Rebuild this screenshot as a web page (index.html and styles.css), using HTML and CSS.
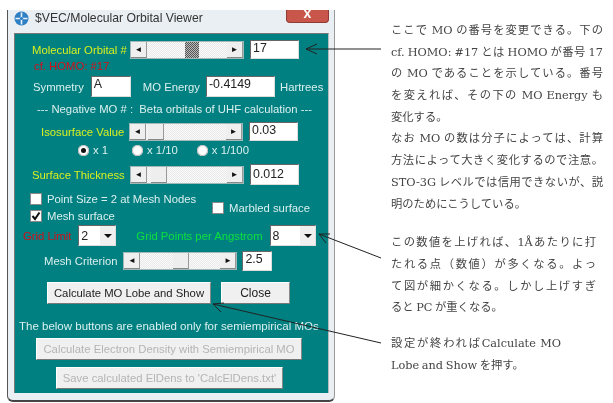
FILE: index.html
```html
<!DOCTYPE html>
<html lang="en">
<head>
  <meta charset="UTF-8">
  <title>$VEC/Molecular Orbital Viewer</title>
  <meta name="viewport" content="width=device-width, initial-scale=1">
  <link rel="stylesheet" href="styles.css">
</head>
<body>
  <div class="window">
    <div class="titlebar">
      <svg class="app-icon" width="15" height="15" viewBox="0 0 15 15">
        <circle cx="7.5" cy="7.5" r="7" fill="#2f7fc4"/>
        <path d="M7.5 1.5v12M1.5 7.5h12" stroke="#e8f2fa" stroke-width="1.6"/>
        <circle cx="7.5" cy="7.5" r="1.6" fill="#2f7fc4"/>
      </svg>
      <span class="title">$VEC/Molecular Orbital Viewer</span>
      <div class="close-x">x</div>
    </div>
    <div class="panel">
      <div class="row r-mo">
        <span class="lbl yellow w-mo">Molecular Orbital #</span>
        <div class="scroll">
          <span class="sb-btn">&#9668;</span>
          <div class="sb-track"><span class="thumb thumb-dark" style="margin-left:38px"></span></div>
          <span class="sb-btn">&#9658;</span>
        </div>
        <div class="field f-mo">17</div>
      </div>
      <div class="row r-cf"><span class="lbl red">cf. HOMO: #17</span></div>
      <div class="row r-sym">
        <span class="lbl">Symmetry</span>
        <div class="field f-sym">A</div>
        <span class="lbl l-energy">MO Energy</span>
        <div class="field f-energy">-0.4149</div>
        <span class="lbl l-hartrees">Hartrees</span>
      </div>
      <div class="row r-neg"><span class="lbl">--- Negative MO # :&nbsp; Beta orbitals of UHF calculation ---</span></div>
      <div class="row r-iso">
        <span class="lbl yellow w-iso">Isosurface Value</span>
        <div class="scroll">
          <span class="sb-btn">&#9668;</span>
          <div class="sb-track"><span class="thumb" style="margin-left:2px"></span></div>
          <span class="sb-btn">&#9658;</span>
        </div>
        <div class="field f-mo">0.03</div>
      </div>
      <div class="row r-radio">
        <span class="radio on"></span><span class="lbl rl-1">x 1</span>
        <span class="radio"></span><span class="lbl rl-2">x 1/10</span>
        <span class="radio"></span><span class="lbl">x 1/100</span>
      </div>
      <div class="row r-thick">
        <span class="lbl yellow w-mo">Surface Thickness</span>
        <div class="scroll">
          <span class="sb-btn">&#9668;</span>
          <div class="sb-track"><span class="thumb" style="margin-left:4px"></span></div>
          <span class="sb-btn">&#9658;</span>
        </div>
        <div class="field f-mo f-tall">0.012</div>
      </div>
      <div class="checks">
        <div class="checks-left">
          <div class="check-row"><span class="check"></span><span class="lbl">Point Size = 2 at Mesh Nodes</span></div>
          <div class="check-row"><span class="check">
            <svg width="10" height="10" viewBox="0 0 10 10"><path d="M1.5 5l2.5 3L8.5 1.5" fill="none" stroke="#111" stroke-width="2"/></svg>
          </span><span class="lbl">Mesh surface</span></div>
        </div>
        <div class="check-row"><span class="check"></span><span class="lbl">Marbled surface</span></div>
      </div>
      <div class="row r-grid">
        <span class="lbl red">Grid Limit</span>
        <div class="combo c-limit"><span>2</span><span class="drop"></span></div>
        <span class="lbl green">Grid Points per Angstrom</span>
        <div class="combo c-points"><span>8</span><span class="drop"></span></div>
      </div>
      <div class="row r-mesh">
        <span class="lbl">Mesh Criterion</span>
        <div class="scroll">
          <span class="sb-btn">&#9668;</span>
          <div class="sb-track"><span class="thumb" style="margin-left:33px"></span></div>
          <span class="sb-btn">&#9658;</span>
        </div>
        <div class="field f-mesh">2.5</div>
      </div>
      <div class="row r-btns">
        <button class="btn b-calc">Calculate MO Lobe and Show</button>
        <button class="btn b-close">Close</button>
      </div>
      <div class="row r-below"><span class="lbl below">The below buttons are enabled only for semiempirical MOs</span></div>
      <div class="row r-dis1"><button class="btn off b-dens">Calculate Electron Density with Semiempirical MO</button></div>
      <div class="row r-dis2"><button class="btn off b-save">Save calculated ElDens to 'CalcElDens.txt'</button></div>
    </div>
  </div>

  <div class="notes">
    <div class="note n-1">
      <span class="ln">ここで MO の番号を変更できる。下の</span>
      <span class="ln">cf. HOMO: #17 とは HOMO が番号 17</span>
      <span class="ln">の MO であることを示している。番号</span>
      <span class="ln">を変えれば、その下の MO Energy も</span>
      <span class="ln end">変化する。</span>
      <span class="ln">なお MO の数は分子によっては、計算</span>
      <span class="ln">方法によって大きく変化するので注意。</span>
      <span class="ln">STO-3G レベルでは信用できないが、説</span>
      <span class="ln end">明のためにこうしている。</span>
    </div>
    <div class="note n-2">
      <span class="ln">この数値を上げれば、1Åあたりに打</span>
      <span class="ln">たれる点（数値）が多くなる。よっ</span>
      <span class="ln">て図が細かくなる。しかし上げすぎ</span>
      <span class="ln end">ると PC が重くなる。</span>
    </div>
    <div class="note n-3">
      <span class="ln">設定が終わればCalculate MO</span>
      <span class="ln end">Lobe and Show を押す。</span>
    </div>
  </div>

  <!-- arrows from the notes to the controls -->
  <svg class="arrows" width="613" height="403" viewBox="0 0 613 403">
    <g fill="none" stroke="#222" stroke-width="1">
      <path d="M381 49H306M317 44l-11 5 11 5"/>
      <path d="M381 258L319 234M330 234l-11 0 7 9"/>
      <path d="M381 343L213 304M224 303l-11 1 8 8"/>
    </g>
  </svg>
</body>
</html>
```
FILE: styles.css
```css
html, body {
  margin: 0;
  padding: 0;
  height: 100%;
  overflow: hidden;
  background: #fff;
}
body {
  display: flex;
  align-items: flex-start;
  font-family: "Liberation Sans", Arial, sans-serif;
  filter: blur(0.35px);
}
.window {
  width: 328px;
  height: 392px;
  margin: 10px 0 0 7px;
  box-sizing: border-box;
  display: flex;
  flex-direction: column;
  padding: 0 5px 7px 6px;
  background: #e9eff2;
  border-left: 1px solid #555;
  border-right: 1px solid #999;
  border-bottom: 2px solid #444;
  border-radius: 0 0 6px 6px;
  flex-shrink: 0;
}
.titlebar {
  height: 23px;
  display: flex;
  align-items: flex-start;
  gap: 6px;
  flex-shrink: 0;
}
.app-icon {
  margin-top: 1px;
}
.title {
  font-size: 12.2px;
  line-height: 16px;
  color: #333;
}
.close-x {
  margin-left: auto;
  width: 43px;
  height: 13px;
  background: #c9564a;
  border: 1px solid #8f3a32;
  border-top: 0;
  border-radius: 0 0 4px 4px;
  box-sizing: border-box;
  color: #fff;
  font-size: 14px;
  font-weight: bold;
  line-height: 6px;
  text-align: center;
}
.panel {
  flex: 1;
  background: #008080;
  border-top: 1px solid #777;
  border-left: 1px solid #777;
  border-right: 1px solid #bbb;
  display: flex;
  flex-direction: column;
  font-size: 11.3px;
}
.row {
  display: flex;
  align-items: center;
  flex-shrink: 0;
}
.lbl {
  color: #dcefef;
  white-space: nowrap;
}
.yellow { color: #d8ee20; }
.red { color: #d2101c; }
.green { color: #0be040; }
.below { font-size: 11.5px; }

/* rows, top to bottom */
.r-mo { height: 19px; margin-top: 6px; padding-left: 17px; }
.r-cf { height: 12px; margin-top: 1px; padding-left: 19px; }
.r-sym { height: 21px; margin-top: 4px; padding-left: 18px; }
.r-neg { height: 12px; margin-top: 6px; padding-left: 22px; }
.r-iso { height: 19px; margin-top: 7px; padding-left: 26px; }
.r-radio { height: 12px; margin-top: 3px; padding-left: 63px; }
.r-thick { height: 21px; margin-top: 8px; padding-left: 17px; }
.r-grid { height: 21px; margin-top: 2px; padding-left: 8px; }
.r-mesh { height: 20px; margin-top: 5px; padding-left: 29px; }
.r-btns { height: 22px; margin-top: 11px; padding-left: 32px; gap: 10px; }
.r-below { height: 12px; margin-top: 16px; padding-left: 4px; }
.r-dis1 { height: 22px; margin-top: 6px; padding-left: 21px; }
.r-dis2 { height: 22px; margin-top: 7px; padding-left: 41px; }

.w-mo { width: 99px; }
.w-iso { width: 89px; }

/* scrollbars */
.scroll {
  width: 112px;
  height: 16px;
  flex-shrink: 0;
  display: flex;
  background: #f1f1f1;
  box-shadow: 0 0 0 1px #9fb8b8;
}
.r-mo .scroll, .r-thick .scroll, .r-iso .scroll { margin-right: 7px; }
.r-mesh .scroll { margin: 0 6px 0 7px; }
.sb-btn {
  width: 16px;
  flex-shrink: 0;
  background: #efefef;
  border-right: 1px solid #999;
  border-bottom: 1px solid #888;
  box-sizing: border-box;
  color: #111;
  font-size: 8px;
  line-height: 15px;
  text-align: center;
}
.sb-track {
  flex: 1;
  display: flex;
  background: repeating-conic-gradient(#fbfbfb 0 25%, #e8e8e8 0 50%) 0 0 / 2px 2px;
}
.thumb {
  width: 16px;
  background: #eee;
  border-right: 1px solid #999;
  border-bottom: 1px solid #888;
  box-sizing: border-box;
}
.thumb-dark {
  width: 14px;
  border: 0;
  background: repeating-conic-gradient(#555 0 25%, #bbb 0 50%) 0 0 / 2px 2px;
}

/* entry fields */
.field {
  box-sizing: border-box;
  background: #fff;
  border: 1px solid #666;
  border-right-color: #ddd;
  border-bottom-color: #ddd;
  color: #222;
  font-size: 12.4px;
  line-height: 15px;
  padding-left: 2px;
}
.f-mo { width: 49px; height: 19px; }
.f-tall { height: 21px; line-height: 18px; }
.f-sym { width: 40px; height: 21px; margin-left: 7px; }
.f-energy { width: 69px; height: 21px; margin-left: 6px; }
.f-mesh { width: 30px; height: 20px; }
.l-energy { margin-left: 12px; }
.l-hartrees { margin-left: 5px; }

/* radio buttons */
.radio {
  width: 11px;
  height: 11px;
  border-radius: 50%;
  background: #fff;
  box-shadow: inset 0 0 0 1px #bbb;
  position: relative;
  flex-shrink: 0;
}
.radio.on::after {
  content: "";
  position: absolute;
  top: 3px;
  left: 3px;
  width: 5px;
  height: 5px;
  border-radius: 50%;
  background: #111;
}
.r-radio .lbl { margin-left: 4px; }
.rl-1 { margin-right: 24px; }
.rl-2 { margin-right: 19px; }

/* check boxes */
.checks {
  display: flex;
  align-items: center;
  height: 31px;
  margin-top: 7px;
  padding-left: 15px;
}
.checks-left {
  display: flex;
  flex-direction: column;
  gap: 5px;
  width: 182px;
}
.check-row {
  display: flex;
  align-items: center;
  gap: 5px;
  height: 12px;
}
.check {
  width: 12px;
  height: 12px;
  box-sizing: border-box;
  background: #fff;
  border: 1px solid #888;
  display: flex;
  align-items: center;
  justify-content: center;
}

/* combo boxes */
.combo {
  box-sizing: border-box;
  height: 21px;
  display: flex;
  align-items: center;
  background: #fff;
  border: 1px solid #666;
  border-right-color: #ddd;
  border-bottom-color: #ddd;
  color: #222;
  font-size: 12.4px;
  padding-left: 2px;
}
.c-limit { width: 38px; margin: 0 20px 0 7px; }
.c-points { width: 46px; margin-left: 7px; }
.drop {
  margin-left: auto;
  width: 15px;
  height: 100%;
  background: #efefef;
  position: relative;
}
.drop::after {
  content: "";
  position: absolute;
  top: 8px;
  left: 4px;
  border: 4px solid transparent;
  border-top: 4px solid #111;
  border-bottom: 0;
}

/* push buttons */
.btn {
  box-sizing: border-box;
  height: 22px;
  padding: 0;
  background: #f0f0f0;
  border: 1px solid #fff;
  border-right-color: #888;
  border-bottom-color: #777;
  color: #222;
  font: 11.3px "Liberation Sans", Arial, sans-serif;
  white-space: nowrap;
}
.b-calc { width: 164px; }
.b-close { width: 69px; font-size: 12px; }
.off { color: #b4b4b4; }
.b-dens { width: 266px; }
.b-save { width: 227px; }

/* annotations */
.notes {
  display: flex;
  flex-direction: column;
  width: 212px;
  margin: 20px 0 0 56px;
  flex-shrink: 0;
}
.note {
  color: #444;
  font: 11.3px/21.7px "DejaVu Serif", "Noto Sans CJK JP", serif;
  word-spacing: -1px;
}
.ln {
  display: block;
  height: 21.7px;
  text-align: justify;
  text-align-last: justify;
  white-space: normal;
}
.ln.end { text-align-last: left; }
.n-2 { width: 205px; margin-top: 17px; }
.n-3 { width: 170px; margin-top: 14px; }

.arrows {
  position: absolute;
  top: 0;
  left: 0;
}
```
